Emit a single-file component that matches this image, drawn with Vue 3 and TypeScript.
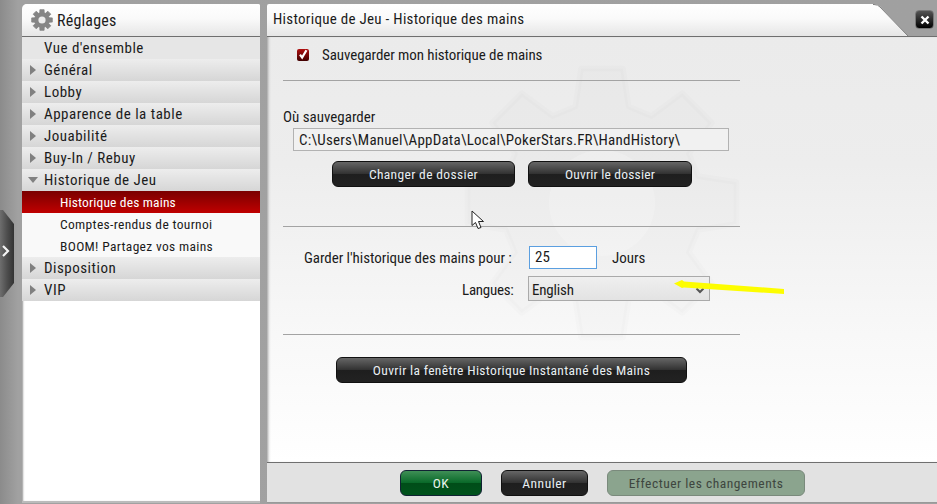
<script setup lang="ts">
interface NavItem { label: string; kind: 'plain' | 'closed' | 'open' | 'sub' | 'active' }
const nav: NavItem[] = [
  { label: "Vue d'ensemble", kind: 'plain' },
  { label: 'Général', kind: 'closed' },
  { label: 'Lobby', kind: 'closed' },
  { label: 'Apparence de la table', kind: 'closed' },
  { label: 'Jouabilité', kind: 'closed' },
  { label: 'Buy-In / Rebuy', kind: 'closed' },
  { label: 'Historique de Jeu', kind: 'open' },
  { label: 'Historique des mains', kind: 'active' },
  { label: 'Comptes-rendus de tournoi', kind: 'sub' },
  { label: 'BOOM! Partagez vos mains', kind: 'sub' },
  { label: 'Disposition', kind: 'closed' },
  { label: 'VIP', kind: 'closed' }
]

function gearPath(outer: number, inner: number, tip: number, root: number): string {
  const pts: string[] = []
  const pt = (r: number, a: number) => `${(r * Math.cos(a)).toFixed(1)} ${(r * Math.sin(a)).toFixed(1)}`
  for (let i = 0; i < 8; i++) {
    const a = (i * Math.PI) / 4 - Math.PI / 2
    pts.push(pt(inner, a - root), pt(outer, a - tip), pt(outer, a + tip), pt(inner, a + root))
  }
  return 'M' + pts.join('L') + 'Z'
}
const bigGear = gearPath(136, 100, 0.155, 0.27)
const smallGear = gearPath(10.5, 7.6, 0.2, 0.3)
</script>

<template>
  <div class="window">
    <div class="side-tab">
      <svg width="9" height="14" viewBox="0 0 9 14"><path d="M2 2l5 5-5 5" fill="none" stroke="#f4f4f4" stroke-width="2.2" /></svg>
    </div>

    <aside class="sidebar">
      <header class="side-head">
        <svg class="gear" width="22" height="22" viewBox="-11 -11 22 22">
          <path :d="smallGear" fill="#858585" stroke="#858585" stroke-width="0.8" stroke-linejoin="round" />
          <circle r="3.600" fill="#ececec" />
        </svg>
        <span>Réglages</span>
      </header>
      <ul class="nav">
        <li v-for="item in nav" :key="item.label" class="nav-row" :class="item.kind">
          <span v-if="item.kind === 'closed'" class="tri-right"></span>
          <span v-if="item.kind === 'open'" class="tri-down"></span>
          {{ item.label }}
        </li>
      </ul>
    </aside>

    <main class="panel">
      <header class="panel-head">
        <div class="title-tab">Historique de Jeu - Historique des mains</div>
        <div class="head-fill">
          <svg class="slant" width="38" height="32" viewBox="0 0 38 32">
            <defs>
              <linearGradient id="slantFill" x1="0" y1="0" x2="0" y2="1">
                <stop offset="0" stop-color="#fff" />
                <stop offset="0.45" stop-color="#fafafa" />
                <stop offset="1" stop-color="#e6e6e6" />
              </linearGradient>
            </defs>
            <path d="M0 0H1Q5 0 7 2.500L35 32H0Z" fill="url(#slantFill)" />
            <path d="M0 0.5H1Q5 0.5 7 3L35 32" fill="none" stroke="#808080" />
          </svg>
          <button class="close" aria-label="Fermer">
            <svg width="10" height="10" viewBox="0 0 10 10"><path d="M1.5 1.5l7 7M8.5 1.5l-7 7" stroke="#fff" stroke-width="2.4" /></svg>
          </button>
        </div>
      </header>

      <section class="content">
        <svg class="watermark" width="280" height="280" viewBox="-140 -140 280 280">
          <path :d="bigGear" fill="#000" fill-opacity="0.013" stroke="#000" stroke-opacity="0.013" stroke-linejoin="round" stroke-width="6" />
          <circle r="53" fill="#fff" fill-opacity="0.2" />
        </svg>

        <div class="form">
          <label class="check-row">
            <span class="check">
              <svg width="14" height="14" viewBox="0 0 14 14"><path d="M3.500 6.500l2.500 3.500L11 1.500" fill="none" stroke="#fff" stroke-width="2.6" /></svg>
            </span>
            Sauvegarder mon historique de mains
          </label>
          <hr class="rule first" />

          <div class="where-label">Où sauvegarder</div>
          <div class="path">C:\Users\Manuel\AppData\Local\PokerStars.FR\HandHistory\</div>
          <div class="folder-btns">
            <button class="btn dark change">Changer de dossier</button>
            <button class="btn dark open-f">Ouvrir le dossier</button>
          </div>
          <hr class="rule second" />

          <div class="keep">
            <span class="keep-label">Garder l'historique des mains pour :</span>
            <span class="days-input">25</span>
            <span class="days">Jours</span>
          </div>
          <div class="lang">
            <span class="lang-label">Langues:</span>
            <span class="select"><span class="lang-value">English</span>
              <svg class="chev" width="10" height="7" viewBox="0 0 10 7"><path d="M1.5 1.5L5 5l3.500-3.500" fill="none" stroke="#555" stroke-width="2" /></svg>
            </span>
          </div>
          <hr class="rule third" />

          <button class="btn dark instant">Ouvrir la fenêtre Historique Instantané des Mains</button>
        </div>

        <svg class="arrow" width="112" height="16" viewBox="0 0 112 16">
          <path d="M1 4.500L9 1l2 1.500L111 10v5L11 8.500 9 9z" fill="#fdfd00" />
        </svg>
        <svg class="cursor" width="14" height="20" viewBox="0 0 14 20">
          <path d="M1 1V15.500L4.500 12.500 7 18.500 10 17.500 7.500 11.500H12.500Z" fill="#fff" stroke="#222" stroke-width="1" />
        </svg>
      </section>

      <footer class="foot">
        <button class="btn green ok">OK</button>
        <button class="btn dark cancel">Annuler</button>
        <button class="btn off apply">Effectuer les changements</button>
      </footer>
    </main>
  </div>
</template>

<style>
html, body { margin: 0; overflow: hidden; }
</style>

<style scoped>
.window {
  position: relative;
  width: 937px;
  height: 504px;
  box-sizing: border-box;
  padding: 4px 0 0 22px;
  display: flex;
  gap: 7px;
  overflow: hidden;
  background: linear-gradient(90deg, #8b8b8b 0, #a1a1a1 18px, #a0a0a0 100%);
  font-family: Roboto, "Liberation Sans", sans-serif;
  font-stretch: 75%;
  font-size: 15px;
  color: #1b1b1b;
}
.side-tab {
  position: absolute;
  left: 0;
  top: 210px;
  width: 14px;
  height: 87px;
  box-sizing: border-box;
  display: flex;
  align-items: center;
  justify-content: flex-start;
  padding: 0 0 6px 1px;
  background: linear-gradient(90deg, #6e6e6e, #4e4e4e 50%, #333);
  clip-path: polygon(0 0, 3px 0, 100% 16%, 100% 84%, 3px 100%, 0 100%);
}
.sidebar {
  width: 238px;
  height: 499px;
  flex: none;
  box-sizing: border-box;
  background: #fff;
  border-radius: 5px 2px 0 0;
  border-bottom: 2px solid #bbb;
  box-shadow: inset 2px 0 2px -1px #999;
}
.side-head {
  height: 33px;
  box-sizing: border-box;
  border-bottom: 1px solid #6f6f6f;
  border-radius: 5px 2px 0 0;
  background: linear-gradient(#fff, #fafafa 45%, #e6e6e6);
  display: flex;
  align-items: center;
  gap: 4px;
  padding-left: 9px;
  font-size: 16px;
  letter-spacing: 0.2px;
}
.gear { flex: none; }
.nav { list-style: none; margin: 0; padding: 0; letter-spacing: 0.5px; }
.nav-row {
  position: relative;
  height: 22px;
  line-height: 23px;
  padding-left: 22px;
  background: linear-gradient(#ededed, #d6d6d6);
  white-space: nowrap;
}
.nav-row.plain { background: #e6e6e6; }
.nav-row.sub, .nav-row.active {
  padding-left: 38px;
  font-size: 13.500px;
  line-height: 22px;
  letter-spacing: 0.33px;
  background: #f9f9f9;
}
.nav-row.active { color: #fff; letter-spacing: 0.15px; background: linear-gradient(#7a0000, #c00000); }
.tri-right, .tri-down { position: absolute; width: 0; height: 0; }
.tri-right {
  left: 8px; top: 6px;
  border-left: 6px solid #808080;
  border-top: 5px solid transparent;
  border-bottom: 5px solid transparent;
}
.tri-down {
  left: 6px; top: 8px;
  border-top: 6px solid #808080;
  border-left: 5px solid transparent;
  border-right: 5px solid transparent;
}
.panel {
  flex: 1;
  min-width: 0;
  display: flex;
  flex-direction: column;
}
.panel-head { height: 33px; flex: none; display: flex; }
.title-tab {
  width: 606px;
  box-sizing: border-box;
  padding-left: 6px;
  line-height: 30px;
  letter-spacing: 0.28px;
  background: linear-gradient(#fff, #fafafa 45%, #e6e6e6);
  border-bottom: 1px solid #6f6f6f;
  border-radius: 2px 0 0 0;
}
.head-fill { flex: 1; position: relative; border-bottom: 1px solid #6f6f6f; height: 32px; }
.slant { display: block; }
.close {
  position: absolute;
  right: 3px;
  top: 6px;
  width: 19px;
  height: 19px;
  padding: 0;
  border: 1px solid #777;
  border-radius: 4px;
  background: linear-gradient(#555, #000);
  display: flex;
  align-items: center;
  justify-content: center;
}
.content {
  position: relative;
  flex: 1;
  min-height: 0;
  box-shadow: inset 3px 0 3px -2px #999;
  background: linear-gradient(#ebebeb, #ededed 30%, #f8f8f8 70%, #fff);
}
.watermark { position: absolute; left: 195px; top: 26px; }
.form { position: relative; padding-left: 16px; width: 457px; }
.check-row {
  display: flex;
  align-items: center;
  height: 36px;
  padding-left: 14px;
  gap: 13px;
  letter-spacing: -0.08px;
}
.check {
  width: 12px;
  height: 12px;
  flex: none;
  box-sizing: border-box;
  border-radius: 2px;
  background: linear-gradient(#b01010, #400000);
  display: flex;
  align-items: center;
  justify-content: center;
}
.rule { margin: 0; border: 0; height: 1px; background: #a3a3a3; }
.rule.first { margin-top: 7px; }
.where-label { margin-top: 27px; line-height: 18px; }
.path {
  width: 436px;
  height: 23px;
  margin: 2px 0 0 10px;
  box-sizing: border-box;
  border: 1px solid #b2b2b2;
  background: #f1f1f1;
  padding-left: 5px;
  line-height: 22px;
  letter-spacing: 0.23px;
  white-space: nowrap;
}
.btn {
  font: inherit;
  font-size: 13.500px;
  letter-spacing: 0.5px;
  height: 26px;
  padding: 0;
  border: 1px solid #111;
  border-radius: 6px;
  color: #e8eef2;
}
.dark { background: linear-gradient(#666, #333 48%, #1e1e1e 50%, #222); }
.folder-btns { display: flex; gap: 13px; margin: 10px 0 0 49px; }
.change { width: 183px; letter-spacing: 0.35px; }
.open-f { width: 164px; letter-spacing: 0.2px; }
.rule.second { margin-top: 39px; }
.keep { display: flex; align-items: center; margin-top: 19px; height: 23px; }
.keep-label { margin-left: 21px; width: 225px; white-space: nowrap; letter-spacing: -0.05px; }
.days-input {
  width: 68px;
  height: 23px;
  box-sizing: border-box;
  border: 1px solid #5b9fe0;
  background: #fff;
  padding-left: 5px;
  line-height: 21px;
}
.days { margin-left: 15px; }
.lang { display: flex; align-items: center; margin-top: 7px; height: 25px; }
.lang-label { margin-left: 179px; width: 66px; white-space: nowrap; letter-spacing: -0.25px; padding-top: 2px; }
.select {
  width: 182px;
  height: 25px;
  box-sizing: border-box;
  border: 1px solid #aaa;
  background: linear-gradient(#efefef, #e3e3e3);
  padding: 0 4px 0 3px;
  display: flex;
  align-items: center;
  justify-content: space-between;
}
.lang-value { padding-top: 2px; letter-spacing: -0.2px; }
.chev { margin-top: 4px; }
.rule.third { margin-top: 33px; }
.instant { display: block; width: 351px; margin: 22px 0 0 53px; letter-spacing: 0.34px; }
.arrow { position: absolute; left: 406px; top: 242px; }
.cursor { position: absolute; left: 204px; top: 173px; }
.foot {
  height: 41px;
  flex: none;
  margin-bottom: 1px;
  box-sizing: border-box;
  border-top: 1px solid #6f6f6f;
  border-bottom: 1px solid #999;
  background: #e2e2e2;
  display: flex;
  align-items: center;
  padding-left: 133px;
}
.ok { width: 82px; }
.green { background: linear-gradient(#3f8f56, #0a6a2a 48%, #004d18 50%, #00521c); border-color: #123; color: #eaf5ec; }
.cancel { width: 87px; margin-left: 19px; }
.apply { width: 198px; margin-left: 19px; }
.off { background: #8ba48e; border-color: #7a8a7c; color: #3e463f; }
</style>
